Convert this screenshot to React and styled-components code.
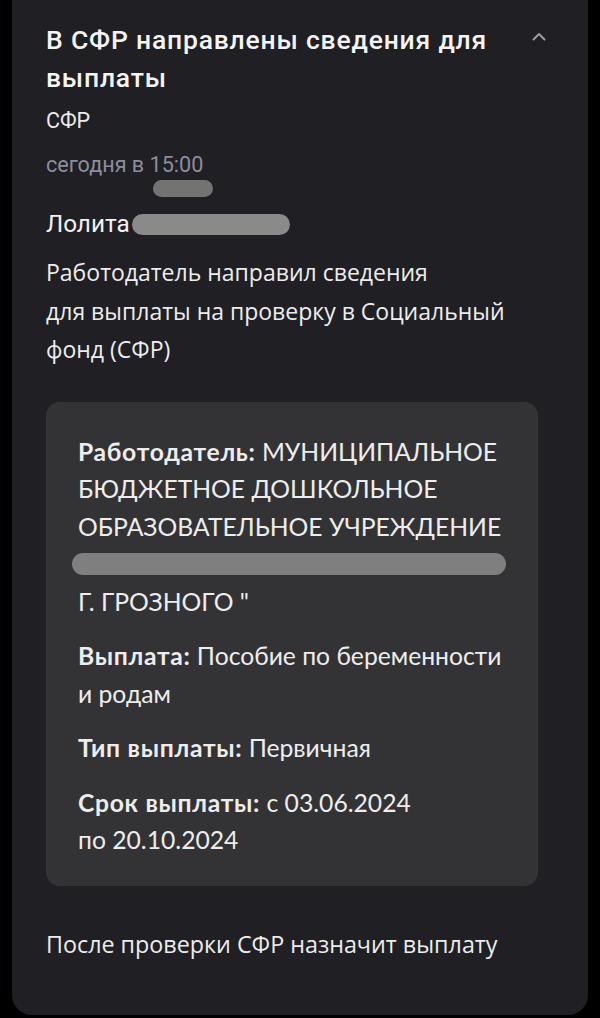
import React from "react";
import styled, { createGlobalStyle } from "styled-components";

const GlobalStyle = createGlobalStyle`
  html, body {
    margin: 0;
    padding: 0;
    background: #000;
  }
  body {
    font-family: "Open Sans", "Noto Sans", sans-serif;
    -webkit-font-smoothing: antialiased;
  }
`;

const Page = styled.div`
  width: 600px;
  height: 1018px;
  overflow: hidden;
  background: #000;
`;

const Card = styled.div`
  margin: 0 12px;
  height: 1015px;
  box-sizing: border-box;
  padding: 21px 34px 0;
  background: #1f1f24;
  border-radius: 0 0 20px 20px;
  color: #f2f2f2;
`;

const Header = styled.div`
  display: flex;
  align-items: flex-start;
  justify-content: space-between;
  gap: 12px;
`;

const Title = styled.h1`
  margin: 0;
  font-family: Roboto, "Liberation Sans", sans-serif;
  font-weight: 500;
  font-size: 26.5px;
  letter-spacing: 0.8px;
  line-height: 38px;
  color: #f4f4f4;
`;

const Toggle = styled.button`
  flex: none;
  margin: 11px 8px 0 0;
  padding: 0;
  border: 0;
  background: none;
  color: #9c9caa;
  display: flex;
`;

const Sender = styled.div`
  margin-top: 9px;
  font-family: Roboto, "Liberation Sans", sans-serif;
  font-size: 21.5px;
  line-height: 30px;
  color: #ececec;
`;

const Time = styled.div`
  margin-top: 14px;
  font-family: Roboto, "Liberation Sans", sans-serif;
  font-size: 21.6px;
  line-height: 30px;
  color: #8d8d9c;
`;

const Blot = styled.span`
  display: ${(p) => (p.$block ? "block" : "inline-block")};
  width: ${(p) => p.$w}px;
  height: ${(p) => p.$h}px;
  margin-left: ${(p) => p.$left || 0}px;
  border-radius: ${(p) => p.$h / 2}px;
  background: ${(p) => p.$color || "#8a8a8a"};
  vertical-align: middle;
`;

const Name = styled.div`
  margin-top: 12px;
  font-family: Roboto, "Liberation Sans", sans-serif;
  font-size: 24.3px;
  line-height: 30px;
  color: #f2f2f2;
  display: flex;
  align-items: center;
`;

const Lead = styled.p`
  margin: 14px 0 0;
  font-family: "Open Sans", "Noto Sans", sans-serif;
  font-size: 23px;
  line-height: 38.5px;
  color: #ededed;
`;

const Details = styled.div`
  margin: 33px 16px 0 0;
  padding: 31px 24px 27px 32px;
  background: #333335;
  border-radius: 14px;
  display: flex;
  flex-direction: column;
  gap: 17px;
`;

const Field = styled.p`
  margin: 0;
  font-family: Lato, "Open Sans", sans-serif;
  font-size: 24.7px;
  line-height: 37.5px;
  color: #ededed;
  white-space: nowrap;

  b {
    font-weight: 700;
    letter-spacing: 0.7px;
  }
`;

const BlotLine = styled.div`
  height: 37.5px;
  display: flex;
  align-items: center;
  margin-left: -6px;
`;

const Footer = styled.p`
  margin: 43px 0 0;
  font-family: "Open Sans", "Noto Sans", sans-serif;
  font-size: 23.3px;
  line-height: 30px;
  color: #ededed;
`;

const ChevronUp = () => (
  <svg width="14" height="9" viewBox="0 0 14 9" fill="none">
    <path d="M1.5 7.5 L7 2 L12.5 7.5" stroke="currentColor" strokeWidth="2" strokeLinecap="round" strokeLinejoin="round" />
  </svg>
);

export default function App() {
  return (
    <Page>
      <GlobalStyle />
      <Card>
        <Header>
          <Title>В СФР направлены сведения для выплаты</Title>
          <Toggle aria-label="Свернуть">
            <ChevronUp />
          </Toggle>
        </Header>
        <Sender>СФР</Sender>
        <Time>сегодня в 15:00</Time>
        <Blot $block $w={60} $h={17} $left={107} $color="#737373" />
        <Name>
          Лолита
          <Blot $w={158} $h={21} $left={2} />
        </Name>
        <Lead>
          Работодатель направил сведения
          <br />
          для выплаты на проверку в Социальный
          <br />
          фонд (СФР)
        </Lead>
        <Details>
          <Field>
            <b>Работодатель:</b> МУНИЦИПАЛЬНОЕ
            <br />
            БЮДЖЕТНОЕ ДОШКОЛЬНОЕ
            <br />
            ОБРАЗОВАТЕЛЬНОЕ УЧРЕЖДЕНИЕ
            <BlotLine>
              <Blot $w={434} $h={22} $color="#7f7f7f" />
            </BlotLine>
            Г. ГРОЗНОГО "
          </Field>
          <Field>
            <b>Выплата:</b> Пособие по беременности
            <br />
            и родам
          </Field>
          <Field>
            <b>Тип выплаты:</b> Первичная
          </Field>
          <Field>
            <b>Срок выплаты:</b> с 03.06.2024
            <br />
            по 20.10.2024
          </Field>
        </Details>
        <Footer>После проверки СФР назначит выплату</Footer>
      </Card>
    </Page>
  );
}
